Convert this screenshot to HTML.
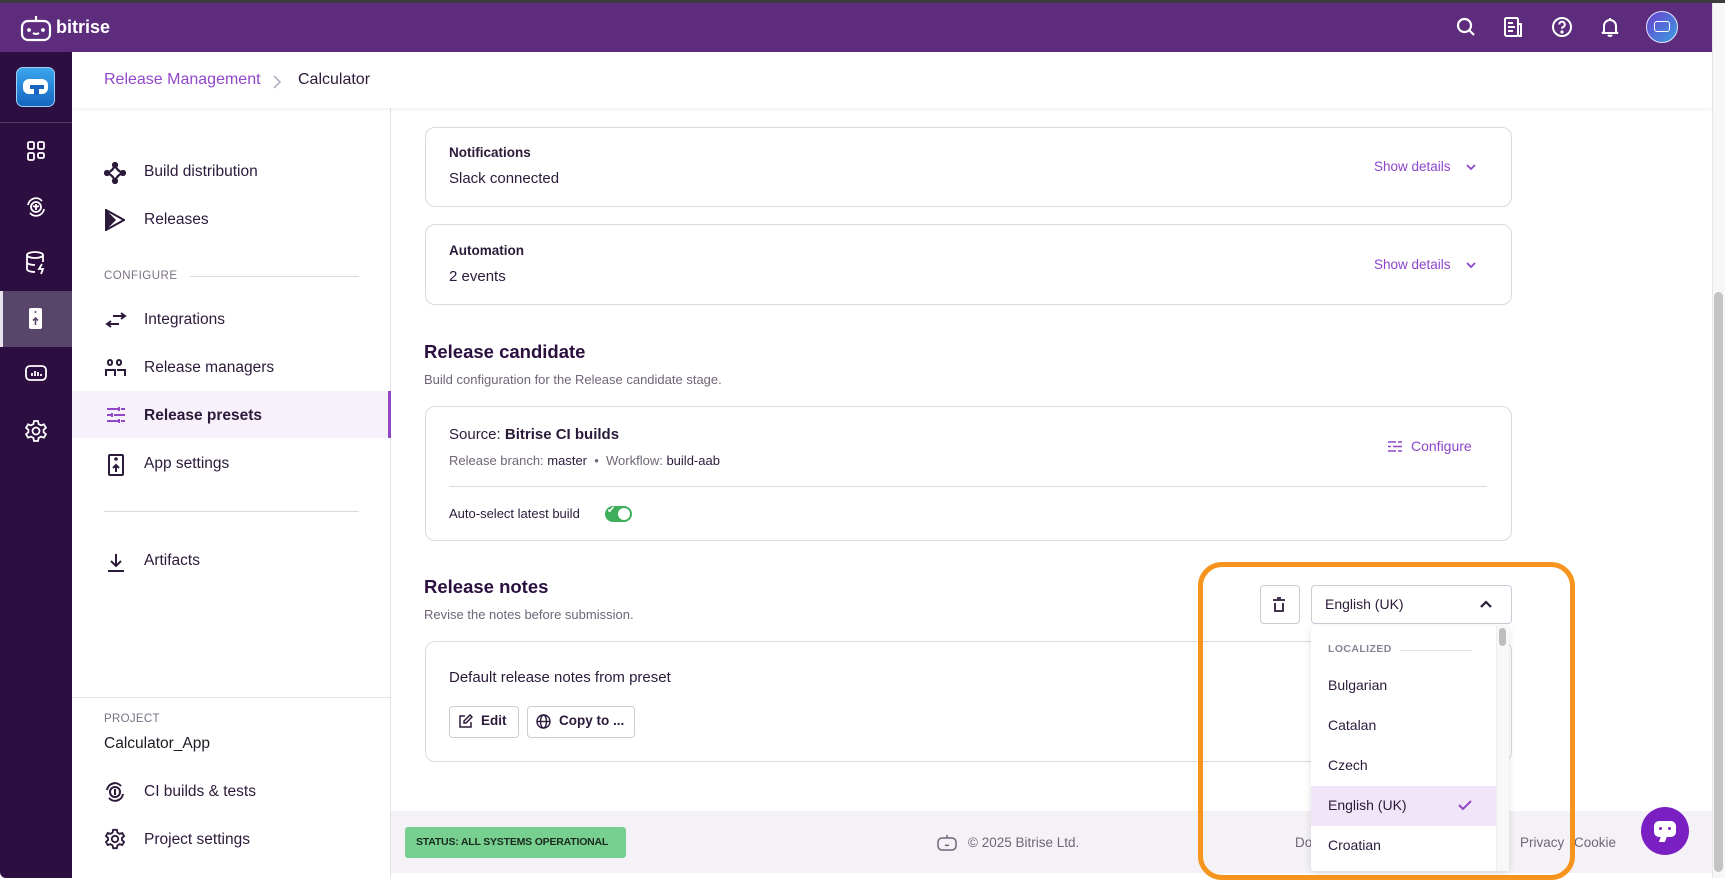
<!DOCTYPE html>
<html><head><meta charset="utf-8"><style>
*{box-sizing:border-box;margin:0;padding:0}
body{width:1725px;height:878px;overflow:hidden;background:#fff;font-family:"Liberation Sans",sans-serif;color:#2b1a3a;position:relative}
.a{position:absolute}
.t{position:absolute;white-space:nowrap}
.card{position:absolute;border:1px solid #dcd8e0;border-radius:10px;background:#fff}
.nav{font-size:15.5px;color:#2b1a3a}
.ico{position:absolute}
.sd{color:#8d45cc;font-size:13.5px}
.item{font-size:14px;color:#2b1a3a}
</style></head><body>
<div class="a" style="left:0;top:0;width:1725px;height:3px;background:#3b3b3b"></div>
<div class="a" style="left:0;top:3px;width:1712px;height:49px;background:#5d2c7d"></div>
<svg class="ico" style="left:20px;top:14px" width="32" height="28" viewBox="0 0 32 28" fill="none" stroke="#fff" stroke-width="2.2"><rect x="2" y="7" width="28" height="19" rx="6"/><line x1="16" y1="2" x2="16" y2="6"/><circle cx="9" cy="16" r="0.8" fill="#fff"/><circle cx="23" cy="16" r="0.8" fill="#fff"/><path d="M13 19q3 2 6 0"/></svg>
<div class="t" style="left:56px;top:17px;color:#fff;font-size:18px;font-weight:bold">bitrise</div>
<svg class="ico" style="left:1456px;top:17px" width="20" height="20" viewBox="0 0 20 20" fill="none" stroke="#fff" stroke-width="2.2"><circle cx="8.5" cy="8.5" r="6.5"/><line x1="13.5" y1="13.5" x2="18" y2="18"/></svg>
<svg class="ico" style="left:1503px;top:16px" width="21" height="22" viewBox="0 0 21 22" fill="none" stroke="#fff" stroke-width="2"><rect x="2" y="2" width="13" height="18" rx="1.5"/><path d="M15 8h3v12h-3"/><line x1="5" y1="7" x2="10" y2="7"/><line x1="5" y1="11" x2="12" y2="11"/><line x1="5" y1="15" x2="10" y2="15"/></svg>
<svg class="ico" style="left:1551px;top:16px" width="22" height="22" viewBox="0 0 22 22" fill="none" stroke="#fff" stroke-width="2"><circle cx="11" cy="11" r="9"/><path d="M8.2 8.5a2.8 2.8 0 1 1 3.8 2.6c-.7.3-1 .8-1 1.6"/><circle cx="11" cy="16" r=".6" fill="#fff"/></svg>
<svg class="ico" style="left:1600px;top:16px" width="20" height="22" viewBox="0 0 20 22" fill="none" stroke="#fff" stroke-width="2"><path d="M4 16V10a6 6 0 0 1 12 0v6l2 1H2z"/><path d="M8 19q2 2 4 0"/><line x1="10" y1="2" x2="10" y2="4"/></svg>
<div class="a" style="left:1646px;top:11px;width:32px;height:32px;border-radius:50%;background:linear-gradient(135deg,#6a3fd0,#3aa0e0);border:1.5px solid #dfe6ff"></div>
<div class="a" style="left:1654px;top:21px;width:16px;height:11px;border:1.5px solid #fff;border-radius:3px"></div>
<div class="a" style="left:0;top:52px;width:72px;height:826px;background:#2c0e40;border-bottom-left-radius:6px"></div>
<div class="a" style="left:16px;top:67px;width:39px;height:40px;border-radius:7px;background:linear-gradient(#3ba6ee,#1665c0);border:1px solid #9fd0f7"></div>
<div class="a" style="left:23px;top:79px;width:25px;height:15px;border-radius:6px;background:#fff"></div>
<div class="a" style="left:30px;top:85px;width:14px;height:4px;background:#1766c1"></div>
<div class="a" style="left:34px;top:85px;width:5px;height:10px;background:#1766c1"></div>
<div class="a" style="left:0;top:122px;width:72px;height:1px;background:#4d3a5d"></div>
<svg class="ico" style="left:27px;top:141px" width="18" height="20" viewBox="0 0 18 20" fill="none" stroke="#fff" stroke-width="1.8"><rect x="1" y="1" width="6" height="7" rx="1.5"/><rect x="11" y="1" width="6" height="7" rx="1.5"/><rect x="1" y="12" width="6" height="7" rx="1.5"/><rect x="11" y="12" width="6" height="5" rx="1.5"/></svg>
<svg class="ico" style="left:25px;top:196px" width="22" height="22" viewBox="0 0 22 22" fill="none" stroke="#fff" stroke-width="1.8"><circle cx="11" cy="11" r="5"/><path d="M3 9a8 8 0 0 1 14-4M19 13a8 8 0 0 1-14 4"/><path d="M11 8v6M8 10l3 1 3-1"/></svg>
<svg class="ico" style="left:25px;top:251px" width="22" height="24" viewBox="0 0 22 24" fill="none" stroke="#fff" stroke-width="1.8"><ellipse cx="10" cy="4" rx="8" ry="3"/><path d="M2 4v14c0 2 4 3 8 3M18 4v7M2 11c0 2 4 3 8 3"/><path d="M17 13l-3 5h4l-2 5" /></svg>
<div class="a" style="left:0;top:291px;width:72px;height:56px;background:#58456a"></div>
<div class="a" style="left:0;top:291px;width:3px;height:56px;background:#e7e2ec"></div>
<div class="a" style="left:29px;top:308px;width:13px;height:21px;border-radius:2px;background:#fff"></div>
<svg class="ico" style="left:29px;top:308px" width="13" height="21" viewBox="0 0 13 21"><circle cx="6.5" cy="4" r="1" fill="#58456a"/><path d="M6.5 17V10M4 12.5l2.5-2.5 2.5 2.5" stroke="#58456a" stroke-width="1.6" fill="none"/></svg>
<svg class="ico" style="left:25px;top:364px" width="22" height="18" viewBox="0 0 22 18" fill="none" stroke="#fff" stroke-width="1.8"><rect x="1" y="2" width="20" height="14" rx="4"/><path d="M7 12V9M10 12V7M13 12V8M16 12V10" /></svg>
<svg class="ico" style="left:24px;top:419px" width="24" height="24" viewBox="0 0 24 24" fill="none" stroke="#fff" stroke-width="1.8"><circle cx="12" cy="12" r="3.5"/><path d="M10 2h4l.6 3 2.4 1.4 2.9-1 2 3.4-2.3 2v2.4l2.3 2-2 3.4-2.9-1L14.6 19 14 22h-4l-.6-3-2.4-1.4-2.9 1-2-3.4 2.3-2v-2.4l-2.3-2 2-3.4 2.9 1L9.4 5z"/></svg>
<div class="a" style="left:72px;top:52px;width:1640px;height:56px;background:#fff;box-shadow:0 2px 3px rgba(0,0,0,.05);z-index:2"></div>
<div class="t" style="left:104px;top:71px;font-size:16px;color:#9247c9;z-index:3">Release Management</div>
<svg class="ico" style="left:272px;top:74px;z-index:3" width="10" height="16" viewBox="0 0 10 16" fill="none" stroke="#b8b0c0" stroke-width="1.6"><path d="M2 2l6 6-6 6"/></svg>
<div class="t" style="left:298px;top:71px;font-size:16px;color:#2b1a3a;z-index:3">Calculator</div>
<div class="a" style="left:390px;top:108px;width:1px;height:770px;background:#e3e0e6"></div>
<svg class="ico" style="left:104px;top:162px" width="22" height="22" viewBox="0 0 22 22" fill="none" stroke="#2b1a3a" stroke-width="2.2"><path d="M11 3Q13 9 19 11 13 13 11 19 9 13 3 11 9 9 11 3z"/><circle cx="11" cy="3" r="2" fill="#2b1a3a"/><circle cx="19" cy="11" r="2" fill="#2b1a3a"/><circle cx="11" cy="19" r="2" fill="#2b1a3a"/><circle cx="3" cy="11" r="2" fill="#2b1a3a"/></svg>
<div class="t nav" style="left:144px;top:163px">Build distribution</div>
<svg class="ico" style="left:105px;top:209px" width="20" height="22" viewBox="0 0 20 22"><path d="M1 1L19 11 1 21z" fill="none" stroke="#2b1a3a" stroke-width="2"/><path d="M1 1l10 10L1 21z" fill="#2b1a3a"/></svg>
<div class="t nav" style="left:144px;top:211px">Releases</div>
<div class="t" style="left:104px;top:270px;font-size:11.5px;color:#7a7084;letter-spacing:.5px">CONFIGURE</div>
<div class="a" style="left:190px;top:276px;width:169px;height:1px;background:#dcd8e0"></div>
<svg class="ico" style="left:105px;top:312px" width="22" height="16" viewBox="0 0 22 16" fill="none" stroke="#2b1a3a" stroke-width="2"><path d="M8 4h12M16 1l4 3-4 3M14 12H2M6 9l-4 3 4 3"/></svg>
<div class="t nav" style="left:144px;top:311px">Integrations</div>
<svg class="ico" style="left:105px;top:359px" width="22" height="18" viewBox="0 0 22 18" fill="none" stroke="#2b1a3a" stroke-width="2"><rect x="3" y="1" width="4" height="5" rx="2"/><rect x="12" y="1" width="4" height="5" rx="2"/><path d="M1 17v-6h9v6M12 11h8v6"/></svg>
<div class="t nav" style="left:144px;top:359px">Release managers</div>
<div class="a" style="left:72px;top:391px;width:318px;height:47px;background:#f7f1fb"></div>
<div class="a" style="left:388px;top:391px;width:3px;height:47px;background:#9247c9"></div>
<svg class="ico" style="left:106px;top:406px" width="20" height="18" viewBox="0 0 20 18" fill="none" stroke="#9247c9" stroke-width="2"><path d="M1 3h11M15 3h4M1 9h4M8 9h11M1 15h11M15 15h4M13 1v4M6 7v4M13 13v4"/></svg>
<div class="t nav" style="left:144px;top:407px;font-weight:bold">Release presets</div>
<svg class="ico" style="left:108px;top:454px" width="16" height="22" viewBox="0 0 16 22" fill="none" stroke="#2b1a3a" stroke-width="2"><rect x="1" y="1" width="14" height="20" rx="1"/><path d="M8 18v-7M5 14l3-3 3 3"/><circle cx="8" cy="5" r=".8" fill="#2b1a3a"/></svg>
<div class="t nav" style="left:144px;top:455px">App settings</div>
<div class="a" style="left:104px;top:511px;width:255px;height:1px;background:#dcd8e0"></div>
<svg class="ico" style="left:107px;top:553px" width="18" height="20" viewBox="0 0 18 20" fill="none" stroke="#2b1a3a" stroke-width="2"><path d="M9 1v12M4 8l5 5 5-5M1 18h16"/></svg>
<div class="t nav" style="left:144px;top:552px">Artifacts</div>
<div class="a" style="left:72px;top:697px;width:318px;height:1px;background:#e3e0e6"></div>
<div class="t" style="left:104px;top:713px;font-size:11.5px;color:#7a7084;letter-spacing:.3px">PROJECT</div>
<div class="t" style="left:104px;top:735px;font-size:15.5px;color:#1f1a24">Calculator_App</div>
<svg class="ico" style="left:104px;top:781px" width="22" height="22" viewBox="0 0 22 22" fill="none" stroke="#2b1a3a" stroke-width="2"><circle cx="11" cy="11" r="5"/><path d="M3 9a8 8 0 0 1 14-4M19 13a8 8 0 0 1-14 4"/><path d="M11 8v6"/></svg>
<div class="t nav" style="left:144px;top:783px">CI builds &amp; tests</div>
<svg class="ico" style="left:104px;top:828px" width="22" height="22" viewBox="0 0 24 24" fill="none" stroke="#2b1a3a" stroke-width="2"><circle cx="12" cy="12" r="3.5"/><path d="M10 2h4l.6 3 2.4 1.4 2.9-1 2 3.4-2.3 2v2.4l2.3 2-2 3.4-2.9-1L14.6 19 14 22h-4l-.6-3-2.4-1.4-2.9 1-2-3.4 2.3-2v-2.4l-2.3-2 2-3.4 2.9 1L9.4 5z"/></svg>
<div class="t nav" style="left:144px;top:831px">Project settings</div>
<div class="card" style="left:425px;top:60px;width:1087px;height:48px"></div>
<div class="card" style="left:425px;top:127px;width:1087px;height:80px"></div>
<div class="t" style="left:449px;top:145px;font-size:13.5px;font-weight:bold;color:#2b1a3a">Notifications</div>
<div class="t" style="left:449px;top:170px;font-size:15px;color:#2b1a3a">Slack connected</div>
<div class="t sd" style="left:1374px;top:159px">Show details</div>
<svg class="ico" style="left:1466px;top:164px" width="10" height="7" viewBox="0 0 10 7" fill="none" stroke="#8d45cc" stroke-width="1.8"><path d="M1 1l4 4 4-4"/></svg>
<div class="card" style="left:425px;top:224px;width:1087px;height:81px"></div>
<div class="t" style="left:449px;top:243px;font-size:13.5px;font-weight:bold;color:#2b1a3a">Automation</div>
<div class="t" style="left:449px;top:268px;font-size:15px;color:#2b1a3a">2 events</div>
<div class="t sd" style="left:1374px;top:257px">Show details</div>
<svg class="ico" style="left:1466px;top:262px" width="10" height="7" viewBox="0 0 10 7" fill="none" stroke="#8d45cc" stroke-width="1.8"><path d="M1 1l4 4 4-4"/></svg>
<div class="t" style="left:424px;top:341px;font-size:18.5px;font-weight:bold;color:#2b0f3f">Release candidate</div>
<div class="t" style="left:424px;top:372px;font-size:13px;color:#6f6678">Build configuration for the Release candidate stage.</div>
<div class="card" style="left:425px;top:406px;width:1087px;height:135px"></div>
<div class="t" style="left:449px;top:426px;font-size:15px;color:#2b1a3a">Source: <b>Bitrise CI builds</b></div>
<div class="t" style="left:449px;top:453px;font-size:13px;color:#6f6678">Release branch: <span style="color:#2b1a3a">master</span> &nbsp;•&nbsp; Workflow: <span style="color:#2b1a3a">build-aab</span></div>
<svg class="ico" style="left:1388px;top:440px" width="14" height="13" viewBox="0 0 14 13" fill="none" stroke="#9247c9" stroke-width="1.6"><path d="M0 2h8M10 2h4M0 6.5h3M5 6.5h9M0 11h8M10 11h4"/></svg>
<div class="t sd" style="left:1411px;top:438px;font-size:14px">Configure</div>
<div class="a" style="left:449px;top:486px;width:1038px;height:1px;background:#dcd8e0"></div>
<div class="t" style="left:449px;top:506px;font-size:13px;color:#2b1a3a">Auto-select latest build</div>
<div class="a" style="left:605px;top:506px;width:27px;height:16px;border-radius:8px;background:#3eae5a"></div>
<div class="a" style="left:618px;top:508px;width:12px;height:12px;border-radius:50%;background:#fff"></div>
<div class="t" style="left:607px;top:505px;font-size:10px;color:#fff">✔</div>
<div class="t" style="left:424px;top:576px;font-size:18.5px;font-weight:bold;color:#2b0f3f">Release notes</div>
<div class="t" style="left:424px;top:607px;font-size:13px;color:#6f6678">Revise the notes before submission.</div>
<div class="card" style="left:425px;top:641px;width:1087px;height:121px"></div>
<div class="t" style="left:449px;top:669px;font-size:15px;color:#2b1a3a">Default release notes from preset</div>
<div class="a" style="left:449px;top:706px;width:70px;height:32px;border:1px solid #cfc9d6;border-radius:4px"></div>
<svg class="ico" style="left:458px;top:714px" width="15" height="15" viewBox="0 0 15 15" fill="none" stroke="#2b1a3a" stroke-width="1.5"><path d="M7 2H2v11h11V8"/><path d="M12 1l2 2-6 6H6V7z"/></svg>
<div class="t" style="left:481px;top:713px;font-size:13.5px;font-weight:bold">Edit</div>
<div class="a" style="left:527px;top:706px;width:108px;height:32px;border:1px solid #cfc9d6;border-radius:4px"></div>
<svg class="ico" style="left:536px;top:714px" width="15" height="15" viewBox="0 0 15 15" fill="none" stroke="#2b1a3a" stroke-width="1.4"><circle cx="7.5" cy="7.5" r="6.5"/><ellipse cx="7.5" cy="7.5" rx="3" ry="6.5"/><path d="M1 7.5h13"/></svg>
<div class="t" style="left:559px;top:713px;font-size:13.5px;font-weight:bold">Copy to ...</div>
<div class="a" style="left:391px;top:811px;width:1321px;height:62px;background:#f4f2f6"></div>
<div class="a" style="left:405px;top:827px;width:221px;height:31px;background:#77d08f;border-radius:3px"></div>
<div class="t" style="left:416px;top:836px;font-size:10.5px;font-weight:bold;color:#1a2a1e;letter-spacing:-.2px">STATUS: ALL SYSTEMS OPERATIONAL</div>
<svg class="ico" style="left:937px;top:834px" width="20" height="17" viewBox="0 0 20 17" fill="none" stroke="#6f6678" stroke-width="1.5"><rect x="1" y="4" width="18" height="12" rx="4"/><line x1="10" y1="1" x2="10" y2="4"/><path d="M8 11q2 1 4 0"/></svg>
<div class="t" style="left:968px;top:835px;font-size:13.5px;color:#6f6678">© 2025 Bitrise Ltd.</div>
<div class="t" style="left:1295px;top:835px;font-size:13.5px;color:#6f6678">Do</div>
<div class="t" style="left:1520px;top:835px;font-size:13.5px;color:#6f6678">Privacy</div>
<div class="t" style="left:1574px;top:835px;font-size:13.5px;color:#6f6678">Cookie</div>
<div class="a" style="left:1641px;top:807px;width:48px;height:48px;border-radius:50%;background:#7a1fc2"></div>
<div class="a" style="left:1654px;top:821px;width:22px;height:16px;border-radius:5px;background:#fff"></div>
<div class="a" style="left:1660px;top:836px;width:6px;height:6px;background:#fff;transform:skewX(-20deg)"></div>
<div class="a" style="left:1659px;top:827px;width:3px;height:3px;border-radius:50%;background:#7a1fc2"></div>
<div class="a" style="left:1668px;top:827px;width:3px;height:3px;border-radius:50%;background:#7a1fc2"></div>
<div class="a" style="left:1712px;top:3px;width:13px;height:875px;background:#f7f7f7;border-left:1px solid #e6e6e6"></div>
<div class="a" style="left:1714px;top:292px;width:9px;height:580px;background:#c3c3c3;border-radius:5px"></div>
<div class="a" style="left:1260px;top:585px;width:40px;height:39px;border:1px solid #cfc9d6;border-radius:4px;background:#fff"></div>
<svg class="ico" style="left:1272px;top:597px" width="14" height="15" viewBox="0 0 14 15" fill="none" stroke="#2b1a3a" stroke-width="1.8"><path d="M1 3h12M5 1h4M3 6v8h8V6"/></svg>
<div class="a" style="left:1311px;top:585px;width:201px;height:39px;border:1px solid #cfc9d6;border-radius:4px;background:#fff"></div>
<div class="t" style="left:1325px;top:596px;font-size:14px;color:#2b1a3a">English (UK)</div>
<svg class="ico" style="left:1480px;top:600px" width="12" height="8" viewBox="0 0 12 8" fill="none" stroke="#2b1a3a" stroke-width="2.2"><path d="M1 7l5-5 5 5"/></svg>
<div class="a" style="left:1311px;top:626px;width:198px;height:245px;background:#fff;box-shadow:0 2px 8px rgba(0,0,0,.12);border-radius:3px"></div>
<div class="a" style="left:1496px;top:626px;width:13px;height:245px;background:#f8f8f8;border-left:1px solid #eee"></div>
<div class="a" style="left:1499px;top:628px;width:7px;height:18px;background:#bdbdbd;border-radius:4px"></div>
<div class="t" style="left:1328px;top:643px;font-size:10.5px;color:#8a8194;font-weight:bold;letter-spacing:.4px">LOCALIZED</div>
<div class="a" style="left:1400px;top:650px;width:72px;height:1px;background:#e3e0e6"></div>
<div class="t item" style="left:1328px;top:677px">Bulgarian</div>
<div class="t item" style="left:1328px;top:717px">Catalan</div>
<div class="t item" style="left:1328px;top:757px">Czech</div>
<div class="a" style="left:1311px;top:786px;width:185px;height:40px;background:#f1e6f7"></div>
<div class="t item" style="left:1328px;top:797px">English (UK)</div>
<svg class="ico" style="left:1458px;top:800px" width="14" height="11" viewBox="0 0 14 11" fill="none" stroke="#9247c9" stroke-width="2"><path d="M1 5l4 4 8-8"/></svg>
<div class="t item" style="left:1328px;top:837px">Croatian</div>
<div class="a" style="left:1198px;top:562px;width:377px;height:318px;border:5px solid #f7941d;border-radius:24px"></div>
</body></html>
